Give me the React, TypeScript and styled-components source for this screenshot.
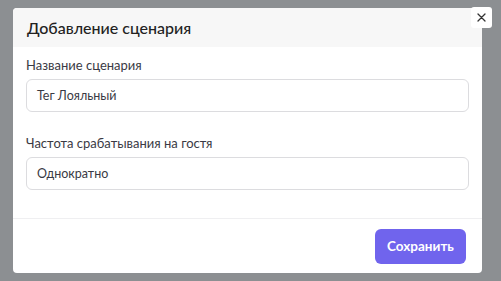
import React from "react";
import styled, { createGlobalStyle } from "styled-components";

const Global = createGlobalStyle`
  html, body { margin: 0; padding: 0; background: #8c8f92; }
  body { font-family: Lato, "Noto Sans", sans-serif; width: 501px; height: 281px; overflow: hidden; }
`;

const Backdrop = styled.div`
  width: 501px;
  height: 281px;
  box-sizing: border-box;
  padding: 8px 0 0 13px;
  background: #8c8f92;
`;

const Modal = styled.div`
  position: relative;
  width: 469px;
  height: 265px;
  background: #ffffff;
  border-radius: 4px;
  display: flex;
  flex-direction: column;
  overflow: visible;
`;

const Header = styled.div`
  height: 39px;
  background: #f7f7f7;
  border-radius: 4px 4px 0 0;
  display: flex;
  align-items: center;
  padding-left: 14px;
`;

const Title = styled.h2`
  margin: 0;
  font-size: 16px;
  font-weight: 500;
  color: #222;
`;

const Close = styled.button`
  position: absolute;
  top: -1px;
  right: -10px;
  width: 21px;
  height: 21px;
  border: none;
  border-radius: 3px;
  background: #ffffff;
  padding: 0;
  display: flex;
  align-items: center;
  justify-content: center;
  cursor: pointer;
`;

const Body = styled.div`
  padding: 9px 13px 0 13px;
  flex: 1;
  display: flex;
  flex-direction: column;
`;

const Field = styled.div<{ $first?: boolean }>`
  display: flex;
  flex-direction: column;
  gap: 5px;
  margin-top: ${(p) => (p.$first ? "0" : "22px")};
`;

const Label = styled.label`
  font-size: 13px;
  line-height: 18px;
  color: #3a3a44;
`;

const Input = styled.div`
  height: 33px;
  box-sizing: border-box;
  border: 1px solid #dcdcdf;
  border-radius: 6px;
  display: flex;
  align-items: center;
  padding-left: 10px;
  font-size: 12.5px;
  color: #3a3a44;
`;

const Footer = styled.div`
  border-top: 1px solid #efeff1;
  height: 55px;
  box-sizing: border-box;
  display: flex;
  justify-content: flex-end;
  align-items: center;
  padding-right: 16px;
`;

const Save = styled.button`
  width: 91px;
  height: 35px;
  border: none;
  border-radius: 6px;
  background: #7064ed;
  color: #ffffff;
  font-family: inherit;
  font-size: 13.5px;
  font-weight: 700;
  cursor: pointer;
`;

export default function App() {
  return (
    <>
      <Global />
      <Backdrop>
        <Modal>
          <Header>
            <Title>Добавление сценария</Title>
          </Header>
          <Close aria-label="Закрыть">
            <svg width="9" height="9" viewBox="0 0 9 9">
              <path d="M1 1L8 8M8 1L1 8" stroke="#333" strokeWidth="1.3" strokeLinecap="round" />
            </svg>
          </Close>
          <Body>
            <Field $first>
              <Label>Название сценария</Label>
              <Input>Тег Лояльный</Input>
            </Field>
            <Field>
              <Label>Частота срабатывания на гостя</Label>
              <Input>Однократно</Input>
            </Field>
          </Body>
          <Footer>
            <Save>Сохранить</Save>
          </Footer>
        </Modal>
      </Backdrop>
    </>
  );
}
